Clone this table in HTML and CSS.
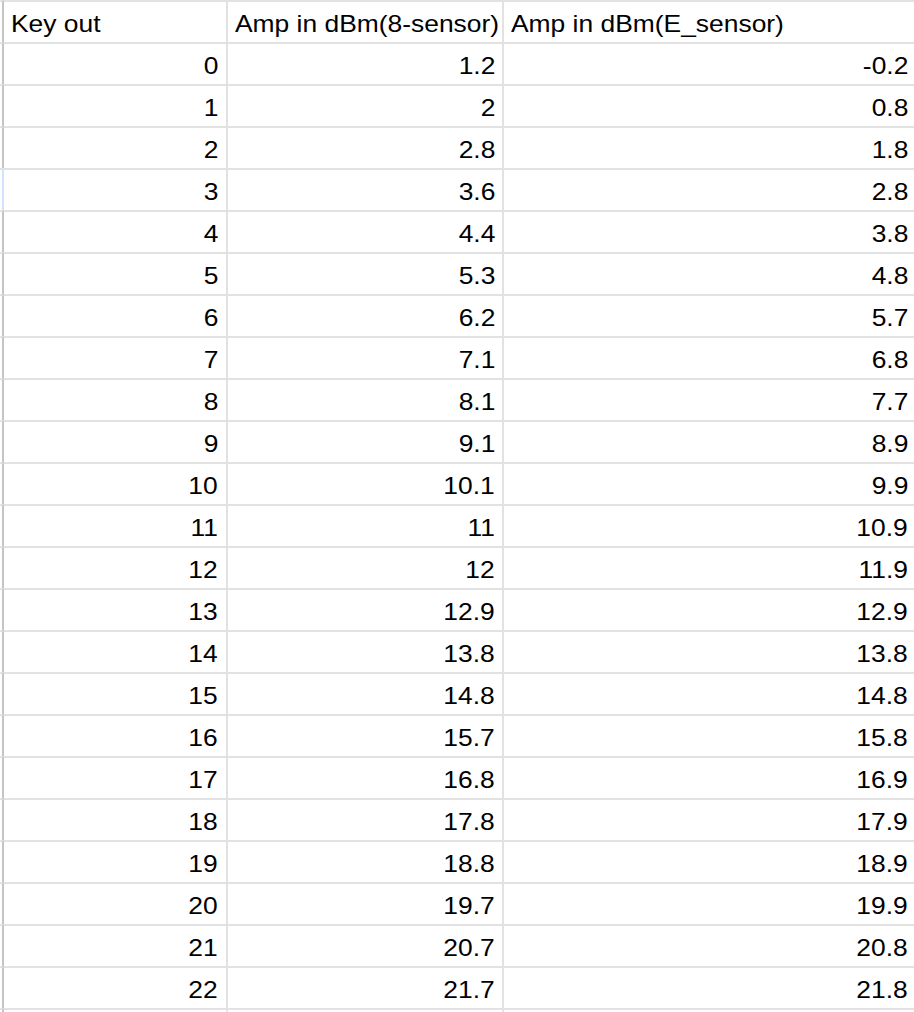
FILE: index.html
```html
<!DOCTYPE html>
<html>
<head>
<meta charset="utf-8">
<link rel="stylesheet" href="styles.css">
</head>
<body>
<div class="sheet">
  <div class="row"><div class="rh"></div><div class="cell a left"><span class="t">Key out</span></div><div class="cell b left"><span class="t">Amp in dBm(8-sensor)</span></div><div class="cell c left"><span class="t">Amp in dBm(E_sensor)</span></div></div>
  <div class="row"><div class="rh"></div><div class="cell a"><span class="t">0</span></div><div class="cell b"><span class="t">1.2</span></div><div class="cell c"><span class="t">-0.2</span></div></div>
  <div class="row"><div class="rh"></div><div class="cell a"><span class="t">1</span></div><div class="cell b"><span class="t">2</span></div><div class="cell c"><span class="t">0.8</span></div></div>
  <div class="row"><div class="rh"></div><div class="cell a"><span class="t">2</span></div><div class="cell b"><span class="t">2.8</span></div><div class="cell c"><span class="t">1.8</span></div></div>
  <div class="row"><div class="rh sel"></div><div class="cell a"><span class="t">3</span></div><div class="cell b"><span class="t">3.6</span></div><div class="cell c"><span class="t">2.8</span></div></div>
  <div class="row"><div class="rh"></div><div class="cell a"><span class="t">4</span></div><div class="cell b"><span class="t">4.4</span></div><div class="cell c"><span class="t">3.8</span></div></div>
  <div class="row"><div class="rh"></div><div class="cell a"><span class="t">5</span></div><div class="cell b"><span class="t">5.3</span></div><div class="cell c"><span class="t">4.8</span></div></div>
  <div class="row"><div class="rh"></div><div class="cell a"><span class="t">6</span></div><div class="cell b"><span class="t">6.2</span></div><div class="cell c"><span class="t">5.7</span></div></div>
  <div class="row"><div class="rh"></div><div class="cell a"><span class="t">7</span></div><div class="cell b"><span class="t">7.1</span></div><div class="cell c"><span class="t">6.8</span></div></div>
  <div class="row"><div class="rh"></div><div class="cell a"><span class="t">8</span></div><div class="cell b"><span class="t">8.1</span></div><div class="cell c"><span class="t">7.7</span></div></div>
  <div class="row"><div class="rh"></div><div class="cell a"><span class="t">9</span></div><div class="cell b"><span class="t">9.1</span></div><div class="cell c"><span class="t">8.9</span></div></div>
  <div class="row"><div class="rh"></div><div class="cell a"><span class="t">10</span></div><div class="cell b"><span class="t">10.1</span></div><div class="cell c"><span class="t">9.9</span></div></div>
  <div class="row"><div class="rh"></div><div class="cell a"><span class="t">11</span></div><div class="cell b"><span class="t">11</span></div><div class="cell c"><span class="t">10.9</span></div></div>
  <div class="row"><div class="rh"></div><div class="cell a"><span class="t">12</span></div><div class="cell b"><span class="t">12</span></div><div class="cell c"><span class="t">11.9</span></div></div>
  <div class="row"><div class="rh"></div><div class="cell a"><span class="t">13</span></div><div class="cell b"><span class="t">12.9</span></div><div class="cell c"><span class="t">12.9</span></div></div>
  <div class="row"><div class="rh"></div><div class="cell a"><span class="t">14</span></div><div class="cell b"><span class="t">13.8</span></div><div class="cell c"><span class="t">13.8</span></div></div>
  <div class="row"><div class="rh"></div><div class="cell a"><span class="t">15</span></div><div class="cell b"><span class="t">14.8</span></div><div class="cell c"><span class="t">14.8</span></div></div>
  <div class="row"><div class="rh"></div><div class="cell a"><span class="t">16</span></div><div class="cell b"><span class="t">15.7</span></div><div class="cell c"><span class="t">15.8</span></div></div>
  <div class="row"><div class="rh"></div><div class="cell a"><span class="t">17</span></div><div class="cell b"><span class="t">16.8</span></div><div class="cell c"><span class="t">16.9</span></div></div>
  <div class="row"><div class="rh"></div><div class="cell a"><span class="t">18</span></div><div class="cell b"><span class="t">17.8</span></div><div class="cell c"><span class="t">17.9</span></div></div>
  <div class="row"><div class="rh"></div><div class="cell a"><span class="t">19</span></div><div class="cell b"><span class="t">18.8</span></div><div class="cell c"><span class="t">18.9</span></div></div>
  <div class="row"><div class="rh"></div><div class="cell a"><span class="t">20</span></div><div class="cell b"><span class="t">19.7</span></div><div class="cell c"><span class="t">19.9</span></div></div>
  <div class="row"><div class="rh"></div><div class="cell a"><span class="t">21</span></div><div class="cell b"><span class="t">20.7</span></div><div class="cell c"><span class="t">20.8</span></div></div>
  <div class="row"><div class="rh"></div><div class="cell a"><span class="t">22</span></div><div class="cell b"><span class="t">21.7</span></div><div class="cell c"><span class="t">21.8</span></div></div>
  <div class="row"><div class="rh"></div><div class="cell a"></div><div class="cell b"></div><div class="cell c"></div></div>
</div>
</body>
</html>
```

FILE: styles.css
```css
html, body {
  margin: 0;
  padding: 0;
  background: #ffffff;
  overflow: hidden;
}

.sheet {
  display: flex;
  flex-direction: column;
  font-family: "Liberation Sans", Arial, sans-serif;
  font-size: 24px;
  color: #000000;
}

.row {
  display: flex;
  height: 42px;
  flex: none;
}

.rh {
  flex: none;
  width: 4px;
  box-sizing: border-box;
  border-top: 2px solid #e2e2e2;
  border-right: 2px solid #c4c4c4;
}

.rh.sel {
  border-right-color: #d3e3fd;
}

.cell {
  flex: none;
  box-sizing: border-box;
  height: 42px;
  border-top: 2px solid #e2e2e2;
  border-right: 2px solid #e2e2e2;
  padding: 10px 8px 0 7px;
  line-height: 24px;
  white-space: nowrap;
  text-align: right;
  overflow: visible;
}

.cell.left {
  text-align: left;
}

.cell.a { width: 224px; }
.cell.b { width: 276px; padding-right: 7px; }
.cell.c { width: 412px; padding-right: 6px; }

.t {
  display: inline-block;
  transform: scaleX(1.1);
  transform-origin: right center;
}

.left .t {
  transform-origin: left center;
}
```
